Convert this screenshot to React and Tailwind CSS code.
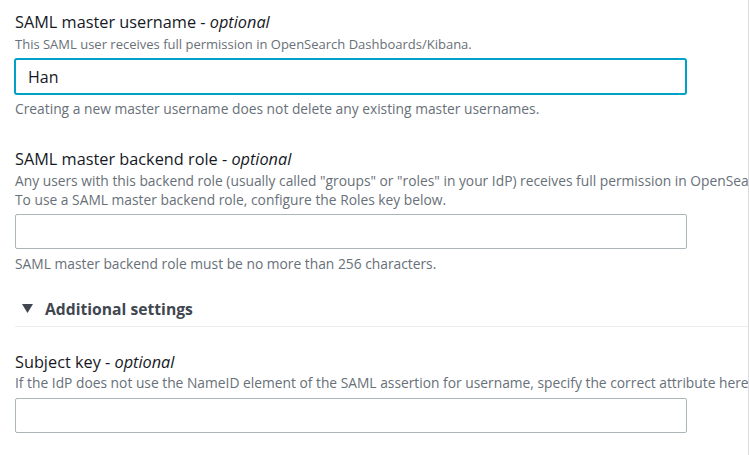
export default function App() {
  const font = { fontFamily: '"Open Sans", "Noto Sans", Arial, sans-serif' };
  return (
    <div className="w-[749px] h-[455px] bg-white overflow-hidden" style={font}>
      <div className="w-[749px] h-[455px] border-r border-[#dcdcdc] overflow-hidden pl-[15px] pt-[11px]">
        <div className="w-[900px]">
          {/* Field 1 */}
          <div className="text-[16.3px] leading-[22px] text-[#16191f]">
            SAML master username - <i>optional</i>
          </div>
          <div className="mt-[2px] text-[13px] leading-[19px] text-[#687078] whitespace-nowrap">
            This SAML user receives full permission in OpenSearch Dashboards/Kibana.
          </div>
          <div className="mt-[4px] w-[673px] h-[37px] -ml-[1px] rounded-[3px] border-2 border-[#00a1c9] flex items-center pl-[12px] text-[16px] text-[#16191f]">
            Han
          </div>
          <div className="mt-[4px] text-[13.8px] leading-[19px] text-[#687078] whitespace-nowrap">
            Creating a new master username does not delete any existing master usernames.
          </div>

          {/* Field 2 */}
          <div className="mt-[30px] text-[16.3px] leading-[22px] text-[#16191f]">
            SAML master backend role - <i>optional</i>
          </div>
          <div className="mt-[1px] text-[13.8px] leading-[19px] text-[#687078] whitespace-nowrap">
            Any users with this backend role (usually called "groups" or "roles" in your IdP) receives full permission in OpenSearch Dashboards/Kibana.
          </div>
          <div className="text-[13.8px] leading-[19px] text-[#687078] whitespace-nowrap">
            To use a SAML master backend role, configure the Roles key below.
          </div>
          <div className="mt-[5px] w-[672px] h-[35px] rounded-[2px] border border-[#aab7b8] bg-white" />
          <div className="mt-[5px] text-[13.8px] leading-[19px] text-[#687078] whitespace-nowrap">
            SAML master backend role must be no more than 256 characters.
          </div>
        </div>

        {/* Additional settings */}
        <div className="mt-[25px] pb-[7px] border-b border-[#eaeded] flex items-center h-[29px]">
          <svg width="11" height="9" viewBox="0 0 11 9" className="ml-[7px] mr-[12px]">
            <polygon points="0,0 11,0 5.5,9" fill="#414750" />
          </svg>
          <span className="text-[15.7px] font-bold leading-[22px] text-[#414750]">Additional settings</span>
        </div>

        <div className="w-[900px]">
          <div className="mt-[24px] text-[16.3px] leading-[22px] text-[#16191f]">
            Subject key - <i>optional</i>
          </div>
          <div className="text-[13.8px] leading-[19px] text-[#687078] whitespace-nowrap">
            If the IdP does not use the NameID element of the SAML assertion for username, specify the correct attribute here.
          </div>
          <div className="mt-[6px] w-[672px] h-[35px] rounded-[2px] border border-[#aab7b8] bg-white" />
        </div>
      </div>
    </div>
  );
}
